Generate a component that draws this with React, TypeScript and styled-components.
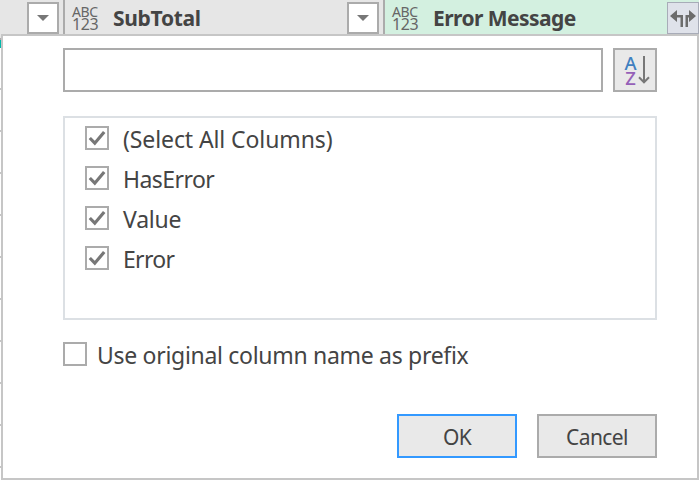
import React from "react";
import styled, { createGlobalStyle } from "styled-components";

const Global = createGlobalStyle`
  * { box-sizing: border-box; }
  html, body { margin: 0; background: #fff; overflow: hidden; }
  body { font-family: "Noto Sans", "Open Sans", sans-serif; color: #444; }
`;

const Screen = styled.div`
  width: 699px;
  height: 480px;
  display: grid;
  grid-template-rows: 34px 446px;
`;

const Header = styled.div`
  display: flex;
  background: #e6e6e6;
`;

const Column = styled.div<{ $width: number; $active?: boolean }>`
  width: ${(p) => p.$width}px;
  height: 34px;
  display: flex;
  flex: none;
  align-items: flex-start;
  background: ${(p) => (p.$active ? "#d3f0e0" : "#e6e6e6")};
  border-left: ${(p) => (p.$width > 63 ? "2px solid #ababab" : "0")};
`;

const TypeTag = styled.div`
  width: 48px;
  padding: 5px 0 0 7px;
  line-height: 13px;
  color: #666;
  white-space: nowrap;
  flex: none;
`;

const TagLine = styled.div<{ $spacing: number; $size: number }>`
  height: 13px;
  font-size: ${(p) => p.$size}px;
  letter-spacing: ${(p) => p.$spacing}px;
`;

const Title = styled.div<{ $spacing: number }>`
  flex: 1;
  font-size: 21px;
  font-weight: 700;
  line-height: 37px;
  letter-spacing: ${(p) => p.$spacing}px;
  white-space: nowrap;
`;

const DropButton = styled.button`
  width: 32px;
  height: 32px;
  margin: 2px 4px 0 auto;
  padding: 0;
  border: 2px solid #ababab;
  background: #fff;
  display: grid;
  place-items: center;
  flex: none;
`;

const ExpandButton = styled(DropButton)`
  margin-right: 0;
  border: 1px solid #a8acb8;
  background: #dfe2ea;
`;

const Body = styled.div`
  display: grid;
  grid-template-columns: 1px 698px;
`;

const RowEdge = styled.div`
  background: repeating-linear-gradient(#fff 0 40px, #c6c6c6 40px 42px);
  background-position: 0 14px;
`;

const Quality = styled.div`
  height: 14px;
  border-top: 4px solid #e6e6e6;
  background: linear-gradient(#ababab 0 2px, #01b8aa 2px);
`;

const Dialog = styled.div`
  border: 2px solid #c6c6c6;
  background: #fff;
  padding: 12px 40px 0 60px;
`;

const SearchRow = styled.div`
  display: flex;
  gap: 10px;
  height: 44px;
`;

const SearchInput = styled.input`
  width: 540px;
  height: 44px;
  border: 2px solid #ababab;
  background: #fff;
  outline: none;
`;

const SortButton = styled.button`
  width: 44px;
  height: 44px;
  padding: 0;
  border: 2px solid #ababab;
  background: #e9e9e9;
  display: flex;
  align-items: center;
`;

const SortLetters = styled.div`
  width: 23px;
  padding-left: 8px;
  font: 500 18.5px/15px "Noto Sans", sans-serif;
  text-align: center;
`;

const Letter = styled.div<{ $color: string }>`
  width: 15px;
  color: ${(p) => p.$color};
`;

const List = styled.div`
  margin-top: 24px;
  height: 204px;
  border: 2px solid #dce0e4;
  padding: 8px 20px;
`;

const CheckRow = styled.label<{ $gap: number; $spacing: number }>`
  display: flex;
  height: 40px;
  gap: ${(p) => p.$gap}px;
  font-size: 23px;
  line-height: 27px;
  letter-spacing: ${(p) => p.$spacing}px;
  white-space: nowrap;
`;

const Box = styled.span`
  width: 24px;
  height: 24px;
  border: 2px solid #ababab;
  flex: none;
  display: block;
  line-height: 0;
`;

const Prefix = styled.div`
  margin-top: 22px;
  height: 72px;
`;

const Actions = styled.div`
  display: flex;
  justify-content: flex-end;
  gap: 20px;
`;

const Button = styled.button<{ $primary?: boolean; $spacing: number }>`
  width: 120px;
  height: 44px;
  padding: 2px 0 0;
  border: 2px solid ${(p) => (p.$primary ? "#3399ff" : "#ababab")};
  background: #e9e9e9;
  color: #444;
  font: 400 21px/36px "Noto Sans", sans-serif;
  letter-spacing: ${(p) => p.$spacing}px;
`;

const Arrow = () => (
  <svg width="28" height="28" viewBox="0 0 28 28">
    <path d="M8 11h12l-6 6z" fill="#777" />
  </svg>
);

const Check = () => (
  <svg width="20" height="20" viewBox="0 0 20 20">
    <path d="M2.8 10l5 5.2L17.2 4" fill="none" stroke="#777" strokeWidth="3.2" />
  </svg>
);

const DownArrow = () => (
  <svg width="12" height="30" viewBox="0 0 12 30">
    <path d="M6 1v26M1 22.3l5 5 5-5" fill="none" stroke="#777" strokeWidth="2" />
  </svg>
);

const Expand = () => (
  <svg width="30" height="30" viewBox="0 0 30 30">
    <path
      d="M2 13l7-6v5h6v12h-2.5v-9.5H9V19zM28 13l-7-6v5h-3.5v12H20v-9.5h1V19z"
      fill="#6c6c6c"
    />
  </svg>
);

const TypeLabel = () => (
  <TypeTag>
    <TagLine $size={14} $spacing={-0.4}>ABC</TagLine>
    <TagLine $size={16} $spacing={-0.4}>123</TagLine>
  </TypeTag>
);

const rows = [
  { label: "(Select All Columns)", spacing: -0.1 },
  { label: "HasError", spacing: -0.55 },
  { label: "Value", spacing: -0.2 },
  { label: "Error", spacing: -0.7 },
];

export default function App() {
  return (
    <>
      <Global />
      <Screen>
        <Header>
          <Column $width={63}>
            <DropButton><Arrow /></DropButton>
          </Column>
          <Column $width={320}>
            <TypeLabel />
            <Title $spacing={-0.3}>SubTotal</Title>
            <DropButton><Arrow /></DropButton>
          </Column>
          <Column $width={316} $active>
            <TypeLabel />
            <Title $spacing={-0.55}>Error Message</Title>
            <ExpandButton><Expand /></ExpandButton>
          </Column>
        </Header>
        <Body>
          <RowEdge><Quality /></RowEdge>
          <Dialog>
            <SearchRow>
              <SearchInput />
              <SortButton>
                <SortLetters>
                  <Letter $color="#4080c0">A</Letter>
                  <Letter $color="#9560b8">Z</Letter>
                </SortLetters>
                <DownArrow />
              </SortButton>
            </SearchRow>
            <List>
              {rows.map((r) => (
                <CheckRow key={r.label} $gap={14} $spacing={r.spacing}>
                  <Box><Check /></Box>
                  {r.label}
                </CheckRow>
              ))}
            </List>
            <Prefix>
              <CheckRow $gap={10} $spacing={-0.3}>
                <Box />
                Use original column name as prefix
              </CheckRow>
            </Prefix>
            <Actions>
              <Button $primary $spacing={-0.6}>OK</Button>
              <Button $spacing={-0.6}>Cancel</Button>
            </Actions>
          </Dialog>
        </Body>
      </Screen>
    </>
  );
}
